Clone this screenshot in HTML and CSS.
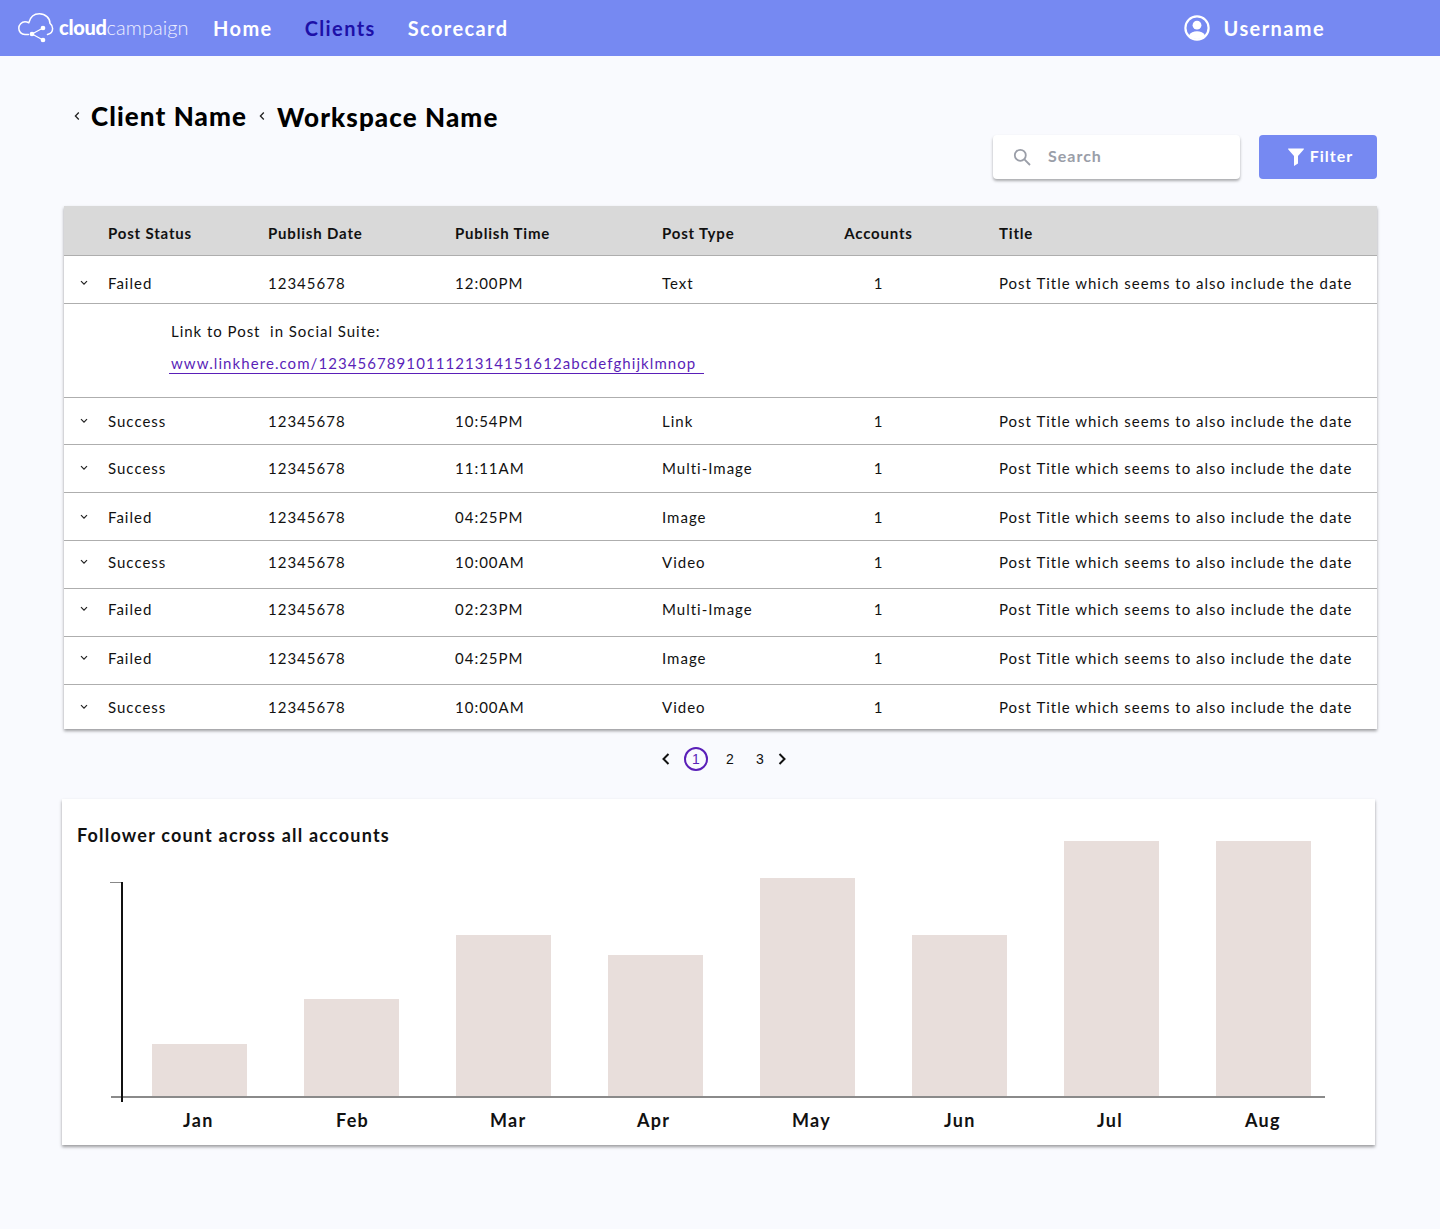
FILE: index.html
```html
<!DOCTYPE html>
<html lang="en">
<head>
<meta charset="utf-8">
<title>Cloud Campaign</title>
<link rel="stylesheet" href="styles.css">
</head>
<body>
<header class="topbar">
  <div class="logo">
    <svg class="logo-mark" width="36" height="30" viewBox="0 0 36 30" fill="none" stroke="#fff" stroke-width="1.5" stroke-linecap="round" stroke-linejoin="round">
      <path d="M10.5 21.5H7C3.2 21.5.8 18.6.8 15.2C.8 11.6 3.6 8.8 7 8.8C8.4 8.8 9.6 9.1 10.8 9.8C12.2 4.2 16.4.8 21.4.8C27.4.8 32 5.2 32 10.4C33.6 11.6 34.6 13.4 34.6 15.6C34.6 18.8 32.4 21 29.5 21.5"/>
      <path d="M14 21L25 15M14 21L25 27" stroke-width="1.2"/>
      <circle cx="25" cy="15" r="1.6" fill="#fff"/>
      <circle cx="14" cy="21" r="1.6" fill="#fff"/>
      <circle cx="25" cy="27" r="1.6" fill="#fff"/>
    </svg>
    <span class="logo-text"><b>cloud</b>campaign</span>
  </div>
  <nav class="nav">
    <a class="nav-link">Home</a>
    <a class="nav-link is-active">Clients</a>
    <a class="nav-link">Scorecard</a>
  </nav>
  <div class="user">
    <svg width="26" height="26" viewBox="0 0 26 26"><circle cx="13" cy="13" r="11.6" fill="none" stroke="#fff" stroke-width="2.2"/><circle cx="13" cy="10.2" r="4.4" fill="#fff"/><path d="M4.8 20.5C6.5 17.4 9.5 16.3 13 16.3C16.5 16.3 19.5 17.4 21.2 20.5C19 23 16 24 13 24C10 24 7 23 4.8 20.5Z" fill="#fff"/></svg>
    <span>Username</span>
  </div>
</header>

<main class="page">
  <div class="crumbs">
    <svg class="crumb-arrow" width="6" height="10" viewBox="0 0 6 10"><path d="M4.8 1.5L1.4 5L4.8 8.5" fill="none" stroke="#222" stroke-width="1.3"/></svg>
    <h1 class="crumb">Client Name</h1>
    <svg class="crumb-arrow" width="6" height="10" viewBox="0 0 6 10"><path d="M4.8 1.5L1.4 5L4.8 8.5" fill="none" stroke="#222" stroke-width="1.3"/></svg>
    <h1 class="crumb crumb-low">Workspace Name</h1>
  </div>

  <div class="tools">
    <div class="search">
      <svg width="18" height="18" viewBox="0 0 18 18" fill="none" stroke="#9a9ea8" stroke-width="1.8"><circle cx="7.3" cy="7.3" r="5.5"/><path d="M11.4 11.4L17 17"/></svg>
      <span class="tool-label">Search</span>
    </div>
    <button class="filter">
      <svg width="16" height="18" viewBox="0 0 16 18"><path d="M.5 .5H15.5C16 .5 16 1 15.7 1.4L10 8V15.5L6 18V8L.3 1.4C0 1 0 .5 .5 .5Z" fill="#fff"/></svg>
      <span class="tool-label">Filter</span>
    </button>
  </div>

  <section class="table">
    <div class="row head">
      <span></span><span>Post Status</span><span>Publish Date</span><span>Publish Time</span><span>Post Type</span><span class="acc">Accounts</span><span>Title</span>
    </div>
    <div class="row r1">
      <svg class="chev" viewBox="0 0 8 6"><path d="M1 1.2L4 4.2L7 1.2"/></svg><span>Failed</span><span>12345678</span><span>12:00PM</span><span>Text</span><span class="acc">1</span><span>Post Title which seems to also include the date</span>
    </div>
    <div class="detail">
      <p class="detail-label">Link to Post&nbsp; in Social Suite:</p>
      <a class="detail-link">www.linkhere.com/1234567891011121314151612abcdefghijklmnop</a>
    </div>
    <div class="row r2">
      <svg class="chev" viewBox="0 0 8 6"><path d="M1 1.2L4 4.2L7 1.2"/></svg><span>Success</span><span>12345678</span><span>10:54PM</span><span>Link</span><span class="acc">1</span><span>Post Title which seems to also include the date</span>
    </div>
    <div class="row r3">
      <svg class="chev" viewBox="0 0 8 6"><path d="M1 1.2L4 4.2L7 1.2"/></svg><span>Success</span><span>12345678</span><span>11:11AM</span><span>Multi-Image</span><span class="acc">1</span><span>Post Title which seems to also include the date</span>
    </div>
    <div class="row r4">
      <svg class="chev" viewBox="0 0 8 6"><path d="M1 1.2L4 4.2L7 1.2"/></svg><span>Failed</span><span>12345678</span><span>04:25PM</span><span>Image</span><span class="acc">1</span><span>Post Title which seems to also include the date</span>
    </div>
    <div class="row r5">
      <svg class="chev" viewBox="0 0 8 6"><path d="M1 1.2L4 4.2L7 1.2"/></svg><span>Success</span><span>12345678</span><span>10:00AM</span><span>Video</span><span class="acc">1</span><span>Post Title which seems to also include the date</span>
    </div>
    <div class="row r6">
      <svg class="chev" viewBox="0 0 8 6"><path d="M1 1.2L4 4.2L7 1.2"/></svg><span>Failed</span><span>12345678</span><span>02:23PM</span><span>Multi-Image</span><span class="acc">1</span><span>Post Title which seems to also include the date</span>
    </div>
    <div class="row r7">
      <svg class="chev" viewBox="0 0 8 6"><path d="M1 1.2L4 4.2L7 1.2"/></svg><span>Failed</span><span>12345678</span><span>04:25PM</span><span>Image</span><span class="acc">1</span><span>Post Title which seems to also include the date</span>
    </div>
    <div class="row r8">
      <svg class="chev" viewBox="0 0 8 6"><path d="M1 1.2L4 4.2L7 1.2"/></svg><span>Success</span><span>12345678</span><span>10:00AM</span><span>Video</span><span class="acc">1</span><span>Post Title which seems to also include the date</span>
    </div>
  </section>

  <div class="pager">
    <svg class="pg-arrow" width="10" height="14" viewBox="0 0 10 14"><path d="M7.5 2L2.5 7L7.5 12"/></svg>
    <span class="pg-cur">1</span>
    <span class="pg-num">2</span>
    <span class="pg-num">3</span>
    <svg class="pg-arrow pg-next" width="10" height="14" viewBox="0 0 10 14"><path d="M2.5 2L7.5 7L2.5 12"/></svg>
  </div>

  <section class="chart-card">
    <h2 class="chart-title">Follower count across all accounts</h2>
    <div class="chart">
      <div class="bars">
        <div class="bar" style="height:52px"></div>
        <div class="bar" style="height:97px"></div>
        <div class="bar" style="height:161px"></div>
        <div class="bar" style="height:141px"></div>
        <div class="bar" style="height:218px"></div>
        <div class="bar" style="height:161px"></div>
        <div class="bar" style="height:255px"></div>
        <div class="bar" style="height:255px"></div>
      </div>
      <div class="y-axis"></div>
    </div>
    <div class="labels">
      <span class="l1">Jan</span><span class="l2">Feb</span><span class="l3">Mar</span><span class="l4">Apr</span><span class="l5">May</span><span class="l6">Jun</span><span class="l7">Jul</span><span class="l8">Aug</span>
    </div>
  </section>
</main>
</body>
</html>
```
FILE: styles.css
```css
* { box-sizing: border-box; }
html, body { margin: 0; }
body {
  min-height: 1229px;
  background: #f9fafe;
  color: #111;
  font-family: "Lato", "Liberation Sans", sans-serif;
}
.topbar {
  height: 56px;
  background: #7689f2;
  color: #fff;
  display: flex;
  align-items: center;
  padding-left: 18px;
}
.logo { display: flex; align-items: center; width: 195px; height: 56px; }
.logo-mark { flex: none; margin-right: 3px; margin-top: 0; overflow: visible; }
.logo-text { font-size: 20px; font-weight: 300; letter-spacing: 0.05px; color: #eef0ff; margin-left: 2px; padding-bottom: 2px; }
.logo-text b { font-weight: 900; color: #fff; letter-spacing: -0.3px; }
.nav { display: flex; gap: 32px; padding-bottom: 1px; }
.nav-link { font-size: 20px; font-weight: 700; letter-spacing: 1.4px; color: #fff; }
.nav-link.is-active { color: #1d10a8; }
.user {
  margin-left: auto;
  margin-right: 115px;
  display: flex;
  align-items: center;
  gap: 14px;
  font-size: 20px;
  font-weight: 700;
  letter-spacing: 1.4px;
}
.user span { padding-bottom: 1px; }
.page { padding: 0 63px 0 64px; }
.crumbs { display: flex; align-items: center; height: 34px; margin-top: 43px; padding-left: 10px; margin-bottom: 2px; }
.crumb { margin: 0 0 0 11px; font-size: 26px; font-weight: 900; letter-spacing: 1.1px; color: #000; line-height: 34px; }
.crumb-arrow { flex: none; }
.crumb + .crumb-arrow { margin-left: 12px; }
.crumb-low { margin-top: 2px; margin-left: 12px; }
.tools { display: flex; justify-content: flex-end; gap: 19px; margin-top: 1px; height: 44px; }
.tool-label { padding-bottom: 3px; }
.search {
  width: 247px;
  background: #fff;
  border-radius: 4px;
  box-shadow: 0 2px 3px rgba(0,0,0,.32);
  display: flex;
  align-items: center;
  padding-left: 20px;
  gap: 17px;
  color: #9a9ea8;
  font-size: 16px;
  font-weight: 700;
  letter-spacing: 1px;
}
.filter {
  width: 118px;
  border: 0;
  border-radius: 4px;
  background: #7689f2;
  color: #fff;
  font: 700 16px "Lato", "Liberation Sans", sans-serif;
  letter-spacing: 1px;
  display: flex;
  align-items: center;
  justify-content: center;
  gap: 6px;
  padding: 0 0 0 5px;
}
.table {
  margin-top: 27px;
  margin-left: 0;
  background: #fff;
  box-shadow: 0 2px 3px rgba(0,0,0,.38);
  font-size: 15px;
  letter-spacing: 1px;
  color: #111;
}
.row {
  display: grid;
  grid-template-columns: 44px 160px 187px 207px 182px 155px 1fr;
  align-items: center;
  border-top: 1px solid #aeaeae;
}
.chev { width: 8px; height: 6px; margin-left: 16px; fill: none; stroke: #222; stroke-width: 1.2; }
.acc { width: 69px; text-align: center; }
.head { height: 49px; background: #d9d9d9; border-top: 0; padding-top: 4px; font-weight: 700; letter-spacing: .82px; }
.r1 { height: 48px; padding-top: 6px; }
.r2 { height: 47px; padding-bottom: 1px; }
.r3 { height: 48px; padding-bottom: 2px; }
.r4 { height: 48px; padding-top: 1px; }
.r5 { height: 48px; padding-bottom: 5px; }
.r6 { height: 48px; padding-bottom: 7px; }
.r7 { height: 48px; padding-bottom: 6px; }
.r8 { height: 45px; padding-bottom: 1px; }
.detail { height: 94px; border-top: 1px solid #aeaeae; padding: 17px 0 0 107px; letter-spacing: .97px; }
.detail-label { margin: 0; line-height: 20px; }
.detail-link {
  display: inline-block;
  margin-top: 12px;
  padding: 0 8px 0 2px;
  margin-left: -2px;
  line-height: 20px;
  letter-spacing: 1.07px;
  color: #5a1fb8;
  border-bottom: 1px solid #5a1fb8;
}
.pager { height: 70px; display: flex; align-items: center; padding: 0 0 10px 597px; font-size: 14px; }
.pg-arrow { fill: none; stroke: #111; stroke-width: 2; flex: none; }
.pg-next { margin-left: 2px; }
.pg-cur {
  width: 24px; height: 24px; margin: 0 7px 0 13px;
  border: 2px solid #5a1fb8; border-radius: 50%;
  color: #5a1fb8; display: flex; align-items: center; justify-content: center; font-family: "Liberation Sans", sans-serif;
}
.pg-num { width: 30px; text-align: center; font-family: "Liberation Sans", sans-serif; }
.chart-card {
  margin-left: -2px;
  margin-right: 2px;
  height: 346px;
  background: #fff;
  box-shadow: 0 2px 3px rgba(0,0,0,.38);
  padding: 26px 0 0 15px;
  position: relative;
}
.chart-title { margin: 0; font-size: 18px; font-weight: 700; letter-spacing: 1.2px; line-height: 20px; color: #111; }
.chart { position: relative; margin: 14px 0 0 34px; width: 1214px; height: 239px; }
.y-axis {
  position: absolute; left: 10px; top: 23px; width: 2px; height: 220px; background: #111;
}
.y-axis::before { content: ""; position: absolute; left: -11px; top: 0; width: 11px; height: 1px; background: #888; }
.bars {
  width: 1214px; height: 239px;
  border-bottom: 2px solid #8a8a8a;
  display: flex; align-items: flex-end; padding-left: 41px; gap: 57px;
}
.bar { width: 95px; background: #e8dedb; flex: none; }
.labels { height: 24px; margin-top: 11px; font-size: 18px; font-weight: 700; letter-spacing: 1.3px; position: relative; color: #111; }
.labels span { position: absolute; top: 0; }
.l1 { left: 106px; } .l2 { left: 259px; } .l3 { left: 413px; } .l4 { left: 560px; }
.l5 { left: 715px; } .l6 { left: 867px; } .l7 { left: 1020px; } .l8 { left: 1168px; }
```
